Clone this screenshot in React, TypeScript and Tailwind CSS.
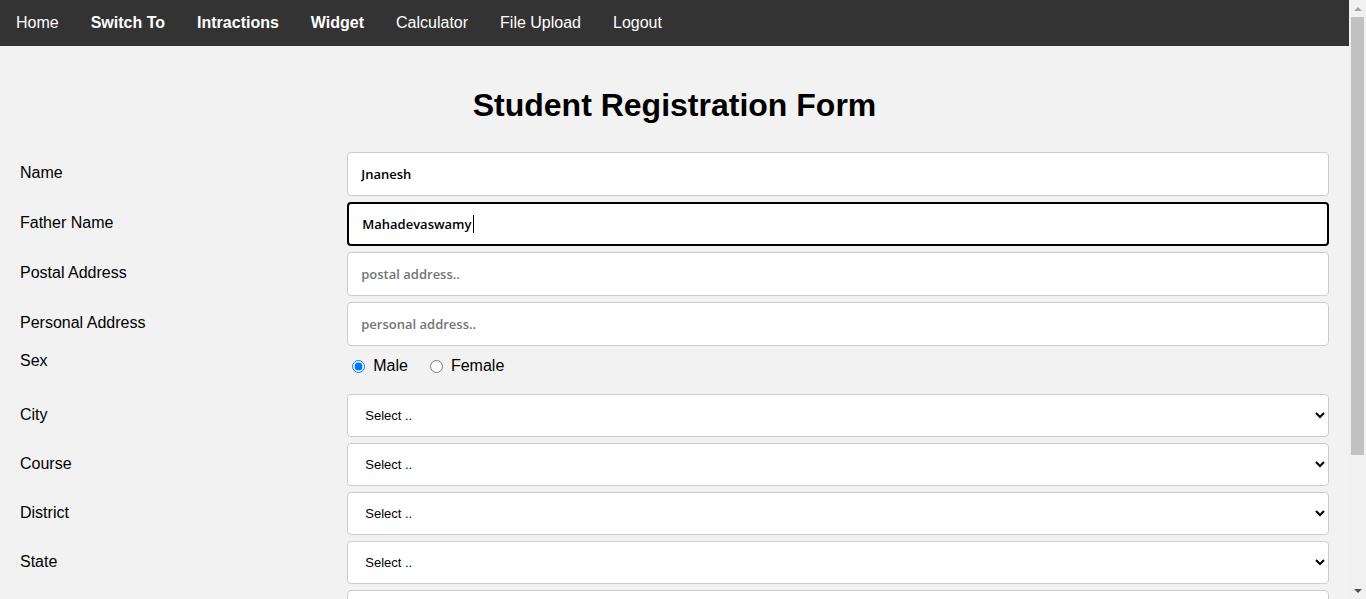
import React from "react";

const navItems = [
  { label: "Home", bold: false },
  { label: "Switch To", bold: true },
  { label: "Intractions", bold: true },
  { label: "Widget", bold: true },
  { label: "Calculator", bold: false },
  { label: "File Upload", bold: false },
  { label: "Logout", bold: false },
];

const textFields = [
  { label: "Name", value: "Jnanesh", placeholder: "your name..", focused: false },
  { label: "Father Name", value: "Mahadevaswamy", placeholder: "father name..", focused: true },
  { label: "Postal Address", value: "", placeholder: "postal address..", focused: false },
  { label: "Personal Address", value: "", placeholder: "personal address..", focused: false },
];

const selectFields = ["City", "Course", "District", "State", "Country"];

function Scrollbar() {
  return (
    <div className="flex h-screen w-[17px] shrink-0 flex-col bg-[#f1f1f1]">
      <div className="flex h-[17px] items-center justify-center">
        <div className="h-0 w-0 border-x-[4px] border-b-[4px] border-x-transparent border-b-[#a3a3a3]" />
      </div>
      <div className="mx-[2px] h-[438px] bg-[#c1c1c1]" />
      <div className="flex-1" />
      <div className="flex h-[17px] items-center justify-center">
        <div className="h-0 w-0 border-x-[4px] border-t-[4px] border-x-transparent border-t-[#505050]" />
      </div>
    </div>
  );
}

export default function App() {
  return (
    <div className="flex h-screen overflow-hidden bg-[#f2f2f2] font-['Liberation_Sans',Arial,sans-serif] text-black">
      <div className="min-w-0 flex-1 overflow-hidden">
        <nav className="flex h-[46px] bg-[#333333]">
          {navItems.map((item) => (
            <a
              key={item.label}
              href="#"
              className={`px-4 py-[14px] text-base leading-[18px] text-white ${item.bold ? "font-bold" : ""}`}
            >
              {item.label}
            </a>
          ))}
        </nav>

        <div className="px-5 pt-5 pb-10">
          <h1 className="mt-[21px] mb-[22px] text-center text-[32px] font-bold leading-[37px]">
            Student Registration Form
          </h1>

          <form>
            {textFields.map((f) => (
              <div key={f.label} className="flex">
                <div className="mt-[6px] w-1/4">
                  <label className="inline-block py-3 pr-3 text-base leading-[18px]">{f.label}</label>
                </div>
                <div className="relative mt-[6px] w-3/4">
                  <input
                    type="text"
                    defaultValue={f.value}
                    placeholder={f.placeholder}
                    className={`h-[44px] w-full rounded bg-white px-[13px] font-['Open_Sans',sans-serif] text-[13px] font-semibold text-black placeholder:text-[#757575] outline-none ${
                      f.focused ? "border-2 border-black px-[12px]" : "border border-[#cccccc]"
                    }`}
                  />
                  {f.focused && (
                    <span className="absolute left-[126px] top-[13px] h-[18px] w-px bg-black" />
                  )}
                </div>
              </div>
            ))}

            <div className="flex h-[42px]">
              <div className="w-1/4 pt-[3px]">
                <label className="text-base leading-[18px]">Sex</label>
              </div>
              <div className="flex h-[40px] w-3/4 items-center text-base">
                <input type="radio" name="sex" defaultChecked className="ml-[5px] mr-[8px] h-[13px] w-[13px] accent-[#0075ff]" />
                <span>Male</span>
                <input type="radio" name="sex" className="ml-[22px] mr-[8px] h-[13px] w-[13px]" />
                <span>Female</span>
              </div>
            </div>

            {selectFields.map((s) => (
              <div key={s} className="flex">
                <div className="mt-[6px] w-1/4">
                  <label className="inline-block py-3 pr-3 text-base leading-[18px]">{s}</label>
                </div>
                <div className="mt-[6px] w-3/4">
                  <select className="h-[43px] w-full rounded border border-[#cccccc] bg-white pl-[13px] pr-2 text-[13px]">
                    <option>Select ..</option>
                  </select>
                </div>
              </div>
            ))}

            <div className="mt-5 flex justify-end">
              <button type="button" className="rounded bg-[#04aa6d] px-5 py-3 text-base text-white">
                Submit
              </button>
            </div>
          </form>
        </div>
      </div>
      <Scrollbar />
    </div>
  );
}
